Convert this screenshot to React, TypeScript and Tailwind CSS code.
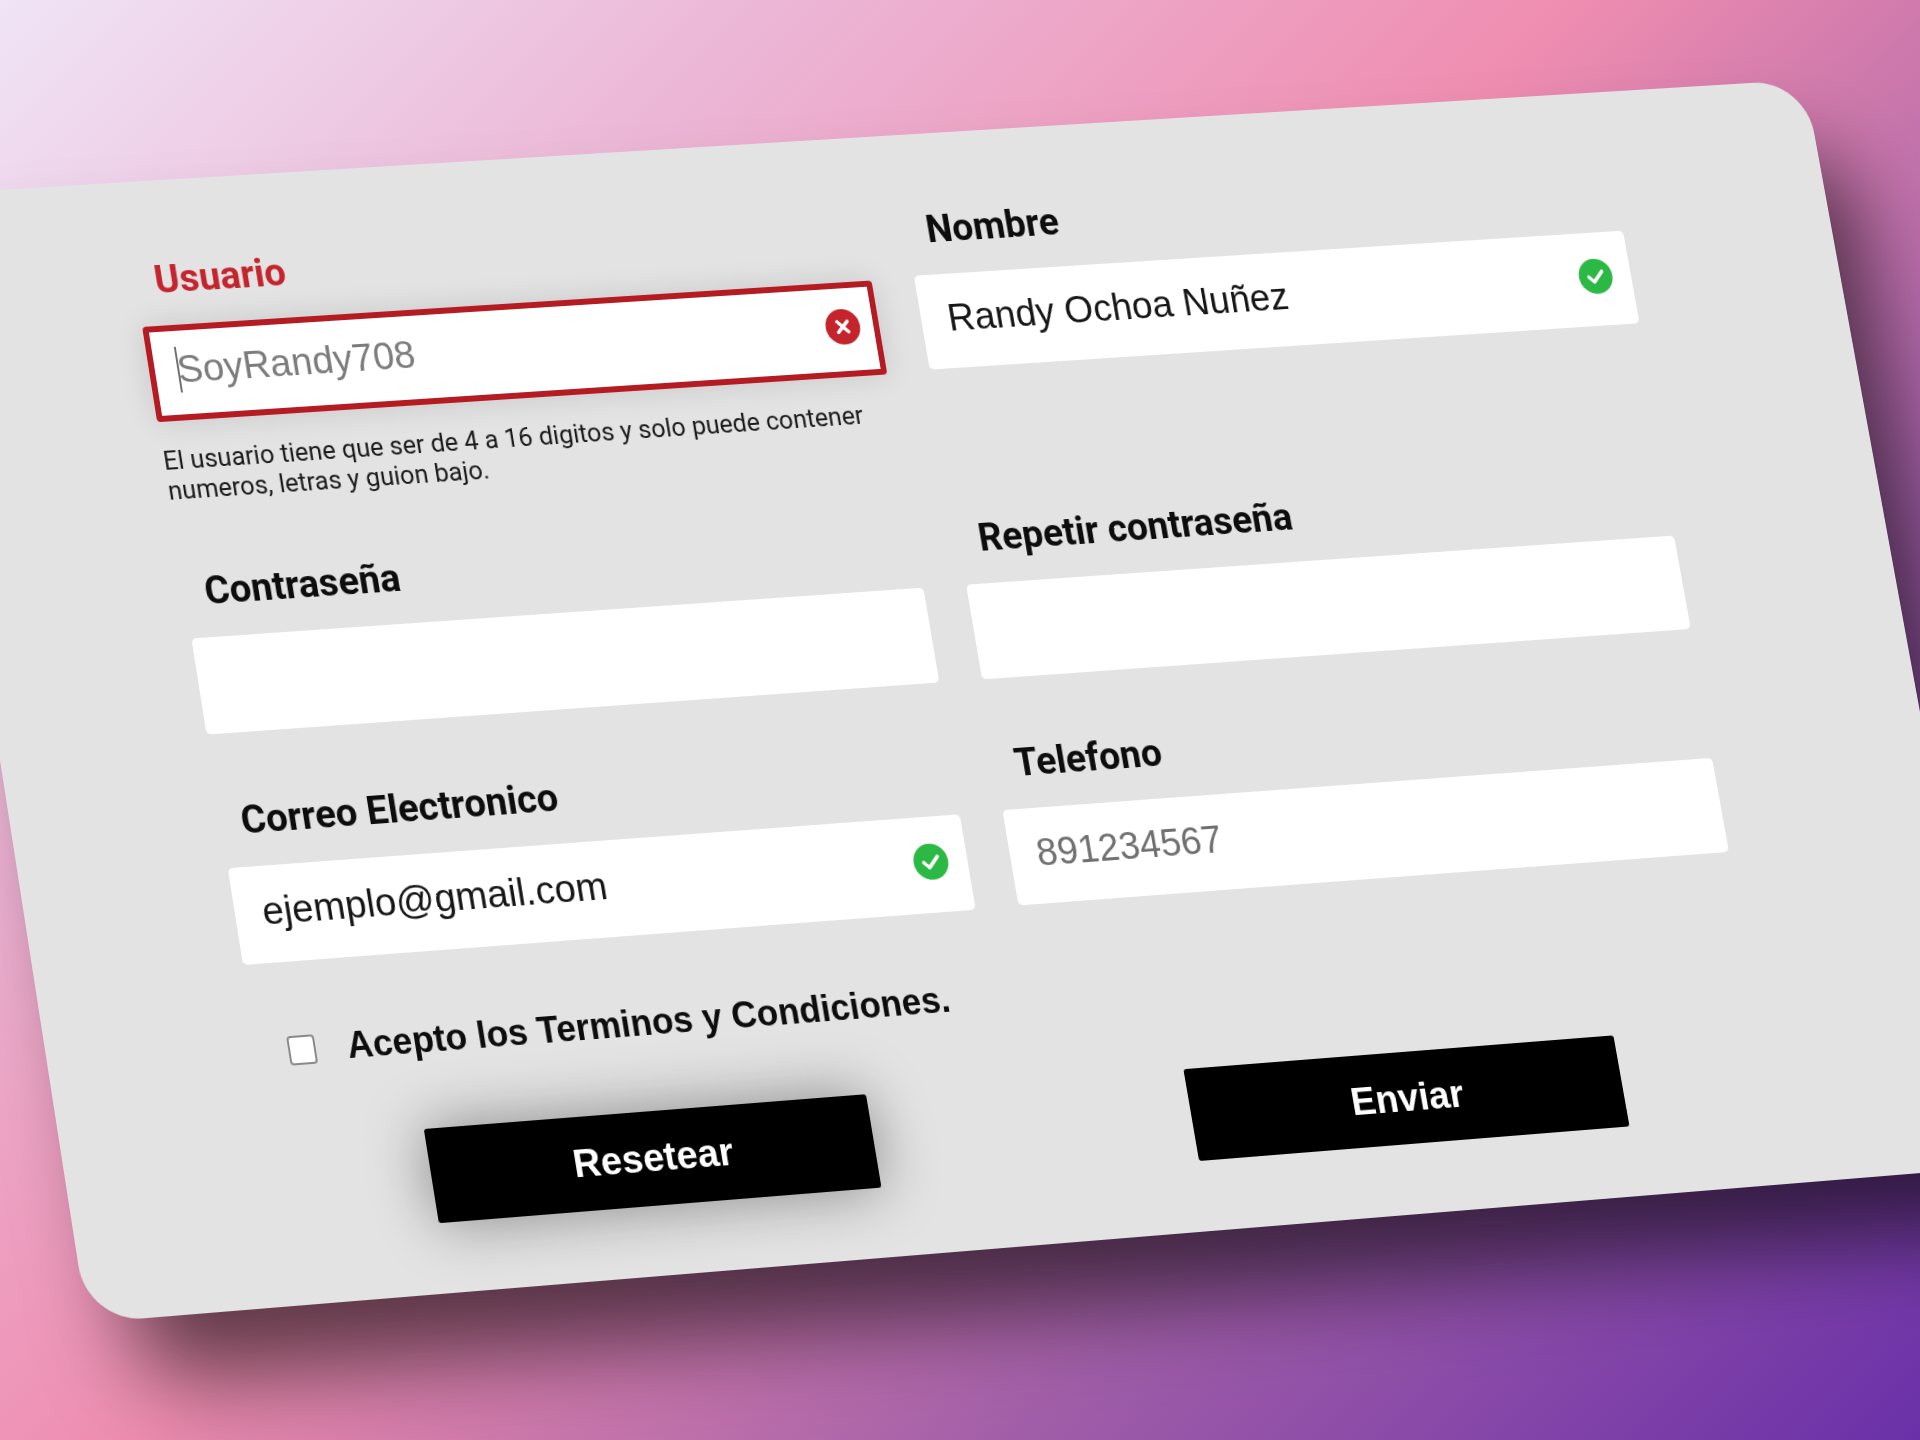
const labelClass = 'mb-[24px] ml-[21px] font-["Roboto",sans-serif] text-[39px] leading-[44px] font-bold text-[#0d0d0d]';
const inputClass = 'flex h-[96px] items-center justify-between rounded-[5px] bg-white pr-[20px] pb-[6px] pl-[28px] font-["Liberation_Sans",sans-serif] text-[39px]';

function StatusIcon({ ok }: { ok: boolean }) {
  return (
    <svg viewBox="0 0 34 34" className="h-[36px] w-[36px] shrink-0">
      <circle cx="17" cy="17" r="17" fill={ok ? '#2cb844' : '#c4242c'} />
      {ok ? (
        <path d="M10 17.5l5 5 9-10" fill="none" stroke="white" strokeWidth="3.4" strokeLinecap="round" strokeLinejoin="round" />
      ) : (
        <path d="M12 12l10 10M22 12L12 22" fill="none" stroke="white" strokeWidth="3.4" strokeLinecap="round" />
      )}
    </svg>
  );
}

function Field({ label, value, muted, ok, className }: { label: string; value?: string; muted?: boolean; ok?: boolean; className?: string }) {
  return (
    <div className={className}>
      <p className={labelClass}>{label}</p>
      <div className={inputClass}>
        <span className={muted ? 'text-[#707070]' : 'text-[#161616]'}>{value}</span>
        {ok && <StatusIcon ok />}
      </div>
    </div>
  );
}

export default function App() {
  return (
    <div className="h-[1440px] w-[1920px] overflow-hidden bg-[linear-gradient(135deg,#f0e4f6_0%,#ecb5d5_24%,#ef8db0_47%,#a15ea8_73%,#6a30a8_100%)]">
      <div className="h-[1120px] w-[2000px] origin-top-left rounded-[56px] bg-[#e3e3e4] pt-[78px] pl-[212px] shadow-[35px_70px_90px_-10px_rgba(0,0,0,0.62)] [transform:matrix3d(0.97805,-0.05634,0,0.00001776,0.15491,0.98792,0,-0.00001433,0,0,1,0,-87.6,195.2,0,1)]">
        <div className="grid w-[1563px] grid-cols-2 gap-x-[45px] gap-y-[65px] blur-[0.7px]">
          <div>
            <p className='mb-[24px] ml-[20px] font-["Roboto",sans-serif] text-[39px] leading-[44px] font-bold text-[#c4242c]'>Usuario</p>
            <div className='flex h-[96px] items-center justify-between rounded-[4px] border-[6px] border-[#b51b22] bg-white pr-[14px] pb-[6px] pl-[23px] font-["Liberation_Sans",sans-serif] text-[39px] text-[#7c7c7c] shadow-[0_0_30px_rgba(0,0,0,0.12)]'>
              <span className="flex items-center">
                <span className="mr-[-2px] h-[46px] w-[2px] bg-[#707070]" />
                SoyRandy708
              </span>
              <StatusIcon ok={false} />
            </div>
            <p className='mt-[24px] h-[60px] font-["Roboto",sans-serif] text-[26px] leading-[30px] text-[#1c1c1c]'>
              El usuario tiene que ser de 4 a 16 digitos y solo puede contener
              <br />
              numeros, letras y guion bajo.
            </p>
          </div>
          <Field label="Nombre" value="Randy Ochoa Nuñez" ok className="-mt-[2px]" />
          <Field label="Contraseña" />
          <Field label="Repetir contraseña" className="mr-[4px]" />
          <Field label="Correo Electronico" value="ejemplo@gmail.com" ok className="mr-[2px]" />
          <Field label="Telefono" value="891234567" muted className="mr-[6px] -ml-[2px] -mt-[1px]" />
        </div>

        <div className="mt-[66px] ml-[32px] flex h-[42px] items-center gap-[32px] blur-[0.7px]">
          <span className="h-[29px] w-[28px] rounded-[4px] border-2 border-[#8a8a8a] bg-white" />
          <span className='font-["Liberation_Sans",sans-serif] text-[36.2px] font-bold text-[#0d0d0d]'>Acepto los Terminos y Condiciones.</span>
        </div>

        <div className="mt-[66px] grid w-[1563px] grid-cols-2 gap-x-[45px] blur-[0.7px]">
          <button className='ml-[156px] h-[93px] w-[456px] rounded-[3px] bg-black font-["Liberation_Sans",sans-serif] text-[39px] font-bold text-white shadow-[0_0_60px_rgba(0,0,0,0.4)]'>Resetear</button>
          <button className='ml-[140px] h-[92px] w-[456px] rounded-[3px] bg-black font-["Liberation_Sans",sans-serif] text-[39px] font-bold text-white'>Enviar</button>
        </div>
      </div>
    </div>
  );
}
